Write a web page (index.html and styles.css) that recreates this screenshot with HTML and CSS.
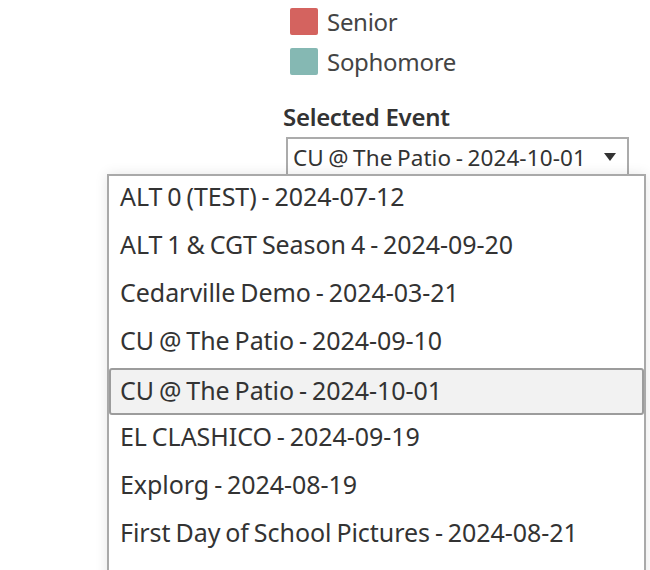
FILE: index.html
```html
<!DOCTYPE html>
<html lang="en">
<head>
<meta charset="utf-8">
<title>Selected Event</title>
<link rel="stylesheet" href="styles.css">
</head>
<body>
<div class="panel">
  <ul class="legend">
    <li class="legend-item"><span class="swatch swatch-senior"></span><span class="legend-label">Senior</span></li>
    <li class="legend-item"><span class="swatch swatch-sophomore"></span><span class="legend-label">Sophomore</span></li>
  </ul>
  <div class="filter">
    <h2 class="filter-title">Selected Event</h2>
    <div class="select">
      <span class="select-value">CU @ The Patio - 2024-10-01</span>
      <svg class="select-arrow" width="12" height="8" viewBox="0 0 12 8"><path d="M0 0H12L6 8Z" fill="#333"/></svg>
    </div>
    <ul class="menu">
      <li class="menu-item">ALT 0 (TEST) - 2024-07-12</li>
      <li class="menu-item">ALT 1 &amp; CGT Season 4 - 2024-09-20</li>
      <li class="menu-item">Cedarville Demo - 2024-03-21</li>
      <li class="menu-item">CU @ The Patio - 2024-09-10</li>
      <li class="menu-item menu-item-selected">CU @ The Patio - 2024-10-01</li>
      <li class="menu-item">EL CLASHICO - 2024-09-19</li>
      <li class="menu-item">Explorg - 2024-08-19</li>
      <li class="menu-item">First Day of School Pictures - 2024-08-21</li>
    </ul>
  </div>
</div>
</body>
</html>
```
FILE: styles.css
```css
html, body {
  margin: 0;
  padding: 0;
  background: #ffffff;
  overflow: hidden;
}

body {
  font-family: "Noto Sans", "Open Sans", sans-serif;
  color: #333333;
}

.panel {
  padding: 8px 0 0 283px;
}

.legend {
  list-style: none;
  margin: 0 0 0 7px;
  padding: 0;
  display: flex;
  flex-direction: column;
  gap: 13px;
}

.legend-item {
  display: flex;
  align-items: center;
  height: 27px;
  gap: 9px;
}

.swatch {
  width: 28px;
  height: 27px;
  border-radius: 2px;
  flex: none;
}

.swatch-senior {
  background: #d4635f;
}

.swatch-sophomore {
  background: #85b8b3;
}

.legend-label {
  font-size: 24px;
  letter-spacing: -0.3px;
  line-height: 27px;
  color: #444444;
}

.filter {
  margin-top: 27px;
}

.filter-title {
  margin: 0;
  font-size: 24px;
  font-weight: 600;
  letter-spacing: -0.3px;
  line-height: 30px;
  color: #333333;
}

.select {
  margin: 5px 0 0 3px;
  width: 343px;
  height: 39px;
  box-sizing: border-box;
  border: 2px solid #ababab;
  padding: 1px 11px 0 5px;
  display: flex;
  align-items: flex-start;
  justify-content: space-between;
  background: #ffffff;
}

.select-value {
  font-size: 22.5px;
  letter-spacing: 0.1px;
  word-spacing: -1.5px;
  line-height: 35px;
  color: #333333;
  white-space: nowrap;
}

.select-arrow {
  margin-top: 13px;
  flex: none;
}

.menu {
  position: absolute;
  left: 107px;
  top: 174px;
  width: 539px;
  height: 420px;
  box-sizing: border-box;
  margin: 0;
  padding: 0;
  list-style: none;
  background: #ffffff;
  border: 2px solid #a9a9a9;
  box-shadow: 0 0 12px rgba(0, 0, 0, 0.1);
  overflow: hidden;
}

.menu-item {
  height: 48px;
  box-sizing: border-box;
  padding: 0 0 8px 11px;
  font-size: 25px;
  letter-spacing: -0.05px;
  word-spacing: -1.5px;
  line-height: 40px;
  color: #333333;
  white-space: nowrap;
}

.menu-item-selected {
  height: 47px;
  margin-bottom: 1px;
  border: 2px solid #9c9c9c;
  border-radius: 3px;
  background: #f2f2f2;
  padding: 0 0 0 9px;
  line-height: 40px;
}
```
